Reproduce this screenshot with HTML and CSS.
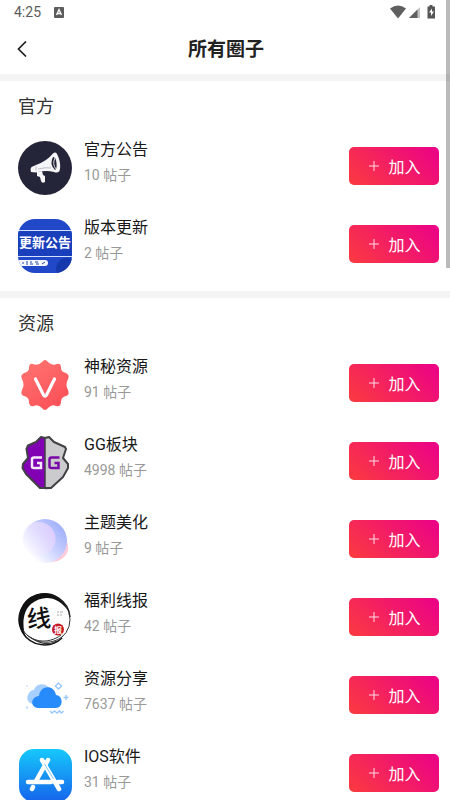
FILE: index.html
```html
<!DOCTYPE html>
<html lang="zh-CN">
<head>
<meta charset="utf-8">
<meta name="viewport" content="width=device-width, initial-scale=1">
<title>所有圈子</title>
<link rel="stylesheet" href="styles.css">
</head>
<body>
<div class="status">
  <span class="time">4:25</span>
  <svg class="input-icon" width="10" height="11" viewBox="0 0 10 11" aria-hidden="true"><rect width="10" height="11" rx="1" fill="#5c5c5c"/><path d="M2.500 8 5 2.500 7.500 8M3.500 6.500h3" fill="none" stroke="#fff" stroke-width="1.300"/></svg>
  <svg class="signals" width="46" height="14" viewBox="0 0 46 14" aria-hidden="true">
    <path d="M0 3.500Q8 -2.500 16 3.500L8 13.500Z" fill="#606060"/>
    <path d="M30 2v11H19Z" fill="#c4c4c4"/><path d="M27.500 4.500V13H19Z" fill="#606060"/>
    <path d="M39.500 0h3v1.500H45V13.500h-7.500V1.500h2Z" fill="#555"/><path d="m42 3.500-3 4h2v3.500l3-4.500h-2Z" fill="#fff"/>
  </svg>
</div>
<header class="header">
  <button class="back" type="button" aria-label="返回"><svg width="10" height="16" viewBox="0 0 10 16"><path d="M9 .5 1.500 8 9 15.500" fill="none" stroke="#222" stroke-width="1.700"/></svg></button>
  <h1>所有圈子</h1>
</header>
<main>
  <section class="group">
    <h2>官方</h2>
    <ul>
      <li class="row">
        <svg class="avatar" viewBox="0 0 54 54" aria-hidden="true">
          <circle cx="27" cy="27" r="27" fill="#25253a"/>
          <path d="M12.500 28 13.500 26 18 24Q29 20 35 12.500Q38 10 39.500 14C42 19 43 26 41.500 30Q39.500 32.500 36 31Q28 29 18 31.500L13 31Z" fill="#f6f6f8"/>
          <path d="M35 16Q31 23 37 29Q39 28 38.500 22Q38 16 35 16Z" fill="#25253a"/>
          <path d="M37 17Q34 23 38 28" fill="none" stroke="#dadbe1"/>
          <path d="m19 31 5-1 1 4 2 1v6q-3 2-4-1l-1-4-3-1Z" fill="#f6f6f8"/>
          <path d="M18 25.500v4M20 28q8-2 13-1" fill="none" stroke="#bdbec8"/>
        </svg>
        <div class="info"><h3>官方公告</h3><p>10 帖子</p></div>
        <button class="join" type="button"><svg width="10" height="10" viewBox="0 0 10 10"><path d="M5 0v10M0 5h10"/></svg>加入</button>
      </li>
      <li class="row">
        <svg class="avatar" viewBox="0 0 54 54" aria-hidden="true">
          <defs><clipPath id="round"><rect width="54" height="54" rx="17"/></clipPath></defs>
          <g clip-path="url(#round)">
            <rect width="54" height="54" fill="#2148c8"/><rect y="12" width="54" height="25" fill="#1a3fbd"/>
            <circle cx="49" cy="50" r="11" fill="#1538ad"/>
            <path d="M0 11.500h54M0 37.500h54" stroke="#d4e2ff"/>
            <rect x="-6" y="41" width="36" height="6" rx="3" fill="#f4f7ff"/>
            <path d="M5 43v2M8 43h2m-2 2h2M12 43h2m-2 2h3M17 43h3m-2 2h3M24 45l3-2" fill="none" stroke="#24469f"/>
          </g>
          <text class="notice" x="1" y="28">更新公告</text>
        </svg>
        <div class="info"><h3>版本更新</h3><p>2 帖子</p></div>
        <button class="join" type="button"><svg width="10" height="10" viewBox="0 0 10 10"><path d="M5 0v10M0 5h10"/></svg>加入</button>
      </li>
    </ul>
  </section>
  <section class="group">
    <h2>资源</h2>
    <ul>
      <li class="row">
        <svg class="avatar" viewBox="0 0 54 54" aria-hidden="true">
          <defs><linearGradient id="red" gradientUnits="userSpaceOnUse" x1="8" y1="4" x2="40" y2="50"><stop stop-color="#ff7470"/><stop offset="1" stop-color="#fb5057"/></linearGradient></defs>
          <path d="M24 4Q27 0 30 4Q34 8 39 6Q43 5 43 10Q43 14 48 15Q52 17 50 21Q47 27 50 32Q52 37 48 38Q43 39 43 44Q43 49 38 48Q34 46 30 50Q27 54 24 50Q20 46 16 48Q11 49 11 44Q11 39 6 38Q2 37 4 32Q7 27 4 21Q2 17 6 15Q11 14 11 10Q11 5 15 6Q20 8 24 4Z" fill="url(#red)"/>
          <path d="m17.500 21 8 16q1.500 2.500 3 0l8-16" fill="none" stroke="#fff" stroke-width="3.200" stroke-linecap="round"/>
        </svg>
        <div class="info"><h3>神秘资源</h3><p>91 帖子</p></div>
        <button class="join" type="button"><svg width="10" height="10" viewBox="0 0 10 10"><path d="M5 0v10M0 5h10"/></svg>加入</button>
      </li>
      <li class="row">
        <svg class="avatar" viewBox="0 0 54 54" aria-hidden="true">
          <path d="M27 2 23 1 18 6 10 9.500 8.500 13 10 22 5 28 4.500 32 8 38 22 52 27 53Z" fill="#8200b4"/>
          <path d="m27 2 4-1 5 5 11 5 1 2-3 9 5 6v4l-5 9-12 12-6 1Z" fill="#cbcbce"/>
          <path d="M27 2 23 1 18 6 10 9.500 8.500 13 10 22 5 28 4.500 32 8 38 22 52H33L45 41 50 32V28L45 22 48 13 47 11 36 6 31 1Z" fill="none" stroke="#414145" stroke-width="2" stroke-linejoin="round"/>
          <path d="M27 2v51" stroke="#414145" stroke-width="1.500"/>
          <path d="M24 21.500h-8q-2 0-2 2v7q0 1.500 2 1.500h7v-5h-4" fill="none" stroke="#f3e7fa" stroke-width="2.500"/>
          <path d="M41.500 21.500h-8q-2 0-2 2v7q0 1.500 2 1.500h7v-5h-4" fill="none" stroke="#7908a8" stroke-width="2.500"/>
        </svg>
        <div class="info"><h3>GG板块</h3><p>4998 帖子</p></div>
        <button class="join" type="button"><svg width="10" height="10" viewBox="0 0 10 10"><path d="M5 0v10M0 5h10"/></svg>加入</button>
      </li>
      <li class="row">
        <svg class="avatar" viewBox="0 0 54 54" aria-hidden="true">
          <defs>
            <linearGradient id="orb" x1=".85" y1=".15" x2=".15" y2=".8"><stop stop-color="#a2b2fb"/><stop offset=".5" stop-color="#cbd2ff"/><stop offset="1" stop-color="#fff"/></linearGradient>
            <linearGradient id="glow" x1="1" y1=".3" x2="0" y2=".8"><stop stop-color="#ddcaff"/><stop offset="1" stop-color="#fff" stop-opacity=".3"/></linearGradient>
          </defs>
          <path d="M49 28C54 40 43 50 27 48Z" fill="#ffcbd9"/>
          <circle cx="27" cy="27" r="22" fill="url(#orb)"/>
          <circle cx="20.500" cy="25" r="17" fill="url(#glow)"/>
        </svg>
        <div class="info"><h3>主题美化</h3><p>9 帖子</p></div>
        <button class="join" type="button"><svg width="10" height="10" viewBox="0 0 10 10"><path d="M5 0v10M0 5h10"/></svg>加入</button>
      </li>
      <li class="row">
        <svg class="avatar" viewBox="0 0 54 54" aria-hidden="true">
          <path d="M52 25A25.500 25.500 0 1 0 44 46" fill="none" stroke="#151515" stroke-width="1.500"/>
          <path d="M51 20C44 3 27-3 13 5C-1 14-3 34 8 46C4 35 4 20 13 12C25 2 41 4 51 20Z" fill="#111"/>
          <path d="M5 38C12 50 30 53 43 43M9 43C20 53 36 52 45 44M51 20Q55 36 43 46M12 45Q26 56 39 49" fill="none" stroke="#333"/>
          <text class="brush" x="9" y="35" transform="rotate(-4 22 27)">线</text>
          <path d="M39 20h2m1 0h3m-6 3h2m1 0h2" stroke="#aaa"/>
          <circle cx="40" cy="37.500" r="6" fill="#c41922"/>
          <text class="seal" x="36" y="41">报</text>
        </svg>
        <div class="info"><h3>福利线报</h3><p>42 帖子</p></div>
        <button class="join" type="button"><svg width="10" height="10" viewBox="0 0 10 10"><path d="M5 0v10M0 5h10"/></svg>加入</button>
      </li>
      <li class="row">
        <svg class="avatar" viewBox="0 0 54 54" aria-hidden="true">
          <path d="M15 34C10 33 8 29 10 25C11 22 13 20 16 20C18 13 28 12 32 19L35 34Z" fill="#a4cfff"/>
          <path d="M21 38C12 38 12 27 21 26C22 15 36 14 38 25C46 26 45 38 38 38Z" fill="#278bfb"/>
          <path d="m40.500 13 3 3-3 3-3-3ZM48 25v5m-2.500-2.500h5M32 41l2 2 2.500-2 2.500 2 2.500-2 2 2 2-2" fill="none" stroke="#98c8ff" stroke-width="1.400"/>
          <circle cx="9" cy="16" r="1" fill="#d2e7ff"/><circle cx="9" cy="37.500" r="1.300" fill="#c6e0ff"/>
        </svg>
        <div class="info"><h3>资源分享</h3><p>7637 帖子</p></div>
        <button class="join" type="button"><svg width="10" height="10" viewBox="0 0 10 10"><path d="M5 0v10M0 5h10"/></svg>加入</button>
      </li>
      <li class="row">
        <svg class="avatar" viewBox="0 0 54 54" aria-hidden="true">
          <defs><linearGradient id="store" x2="0" y2="1"><stop stop-color="#16c8fb"/><stop offset="1" stop-color="#1664ec"/></linearGradient></defs>
          <rect x="1" y="1" width="53" height="53" rx="15" fill="url(#store)"/>
          <g fill="none" stroke="#fff" stroke-width="4.500" stroke-linecap="round">
            <path d="M30 12 18 33M15 39l-1 2M24 12l17 29M10 34h23M40 34h4"/>
          </g>
          <path d="m26.500 16 9 15" stroke="#229df5" stroke-width=".6"/>
        </svg>
        <div class="info"><h3>IOS软件</h3><p>31 帖子</p></div>
        <button class="join" type="button"><svg width="10" height="10" viewBox="0 0 10 10"><path d="M5 0v10M0 5h10"/></svg>加入</button>
      </li>
    </ul>
  </section>
</main>
<div class="scroll-thumb"></div>
</body>
</html>
```

FILE: styles.css
```css
* { box-sizing: border-box; }
html { scrollbar-width: none; }
body {
  margin: 0;
  background: #fff;
  color: #222;
  font-family: Roboto, "Noto Sans CJK SC", sans-serif;
}
h1, h2, h3, p, ul { margin: 0; padding: 0; }
ul { list-style: none; }
button { border: 0; padding: 0; font: inherit; cursor: pointer; }

.status {
  display: flex;
  align-items: center;
  height: 24px;
  padding: 0 14px;
}
.time { font-size: 14px; line-height: 24px; color: #5c5c5c; }
.input-icon { margin-left: 13px; }
.signals { margin-left: auto; }

.header {
  display: grid;
  grid-template-columns: 50px 1fr 48px;
  align-items: center;
  height: 50px;
}
.header h1 {
  padding-top: 2px;
  font-size: 19px;
  line-height: 28px;
  font-weight: 700;
  text-align: center;
}
.back {
  display: flex;
  align-items: center;
  height: 48px;
  padding-left: 17px;
  background: none;
}

.group { border-top: 7px solid #f4f4f4; padding-bottom: 6px; }
.group h2 {
  padding: 4px 18px 0;
  font-size: 18px;
  line-height: 44px;
  font-weight: 400;
  color: #333;
}
.row {
  display: flex;
  height: 78px;
  padding: 9px 11px 0 18px;
}
.avatar { flex: none; width: 54px; height: 54px; margin-top: 3px; }
.info { flex: 1; margin-left: 12px; }
.info h3 { font-size: 16px; line-height: 24px; font-weight: 400; color: #181818; }
.info p { margin-top: 1px; font-size: 14px; line-height: 24px; color: #999; }

.join {
  display: flex;
  align-items: center;
  justify-content: center;
  gap: 9px;
  width: 90px;
  height: 38px;
  margin-top: 9px;
  padding: 0 0 1px 2px;
  border-radius: 5px;
  background: linear-gradient(45deg, #fb3b3f, #eb0089);
  color: #fff;
  font-size: 16px;
}
.join path { stroke: #ffdbe8; fill: none; }

.notice { font: 700 13px "Noto Sans CJK SC", sans-serif; fill: #fff; }
.brush { font: 500 24px "Noto Sans CJK SC", sans-serif; fill: #111; }
.seal { font: 700 8px "Noto Sans CJK SC", sans-serif; fill: #fff; }

.scroll-thumb {
  position: fixed;
  top: 0;
  right: 0;
  width: 4px;
  height: 268px;
  background: rgba(0, 0, 0, 0.27);
}
```
